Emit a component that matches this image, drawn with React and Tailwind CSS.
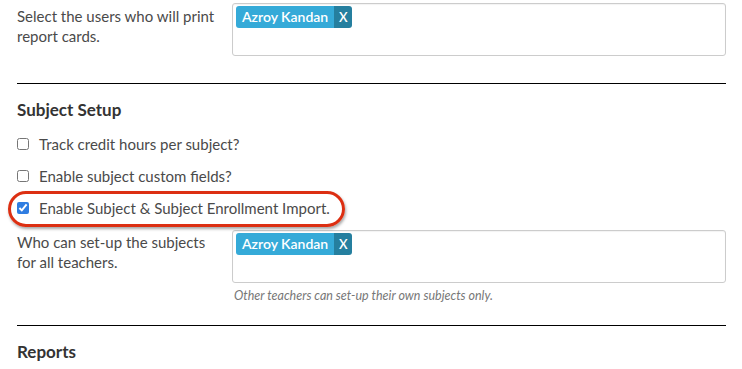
import React from 'react'

function UserTag({name}) {
  return (
    <span className="inline-flex h-[22px] items-stretch overflow-hidden rounded-[3px] text-[14px] font-semibold text-white">
      <span className="flex items-center bg-[#35aad8] px-[6px]">{name}</span>
      <span className="flex w-[18px] items-center justify-center bg-[#257f9f] text-[13px]">X</span>
    </span>
  )
}

function UserPicker({users}) {
  return (
    <div className="h-[53px] w-full rounded-[3px] border border-[#cccccc] bg-white px-[3px] pt-[2px] shadow-[inset_0_1px_1px_rgba(0,0,0,0.05)]">
      {users.map((u) => (
        <UserTag key={u} name={u} />
      ))}
    </div>
  )
}

function CheckRow({label, checked}) {
  return (
    <label className="flex h-[32px] items-center gap-[10px]">
      <input type="checkbox" defaultChecked={checked} className="m-0 h-[12px] w-[12px] accent-[#2f7de1]" />
      <span>{label}</span>
    </label>
  )
}

export default function App() {
  const users = ['Azroy Kandan']

  return (
    <div className="min-h-screen bg-white pl-[17px] pr-[16px] text-[15px] leading-[20px] text-[#4a4a4a]" style={{fontFamily: 'Lato, "Liberation Sans", sans-serif'}}>
      <div className="flex pt-[3px]">
        <div className="w-[215px] pt-[3px] pr-2">Select the users who will print report cards.</div>
        <div className="flex-1">
          <UserPicker users={users} />
        </div>
      </div>

      <hr className="mt-[27px] border-t border-black" />

      <h2 className="mt-[15px] text-[17px] font-bold leading-[22px] text-[#333]">Subject Setup</h2>

      <div className="mt-[7px]">
        <CheckRow label="Track credit hours per subject?" />
        <CheckRow label="Enable subject custom fields?" />
        <div className="relative">
          <CheckRow label="Enable Subject & Subject Enrollment Import." checked />
          <div className="pointer-events-none absolute left-[-9px] top-[-1px] h-[36px] w-[337px] rounded-full border-[3px] border-[#dc2f12] shadow-[1px_2px_3px_rgba(0,0,0,0.35)]" />
        </div>
      </div>

      <div className="flex pt-[6px]">
        <div className="w-[215px] pt-[2px] pr-2">Who can set-up the subjects for all teachers.</div>
        <div className="flex-1">
          <UserPicker users={users} />
          <p className="mt-[5px] pl-[2px] text-[12.5px] italic leading-[16px] text-[#777]">Other teachers can set-up their own subjects only.</p>
        </div>
      </div>

      <hr className="mt-[21px] border-t border-black" />

      <h2 className="mt-[15px] text-[17px] font-bold leading-[22px] text-[#333]">Reports</h2>
    </div>
  )
}
